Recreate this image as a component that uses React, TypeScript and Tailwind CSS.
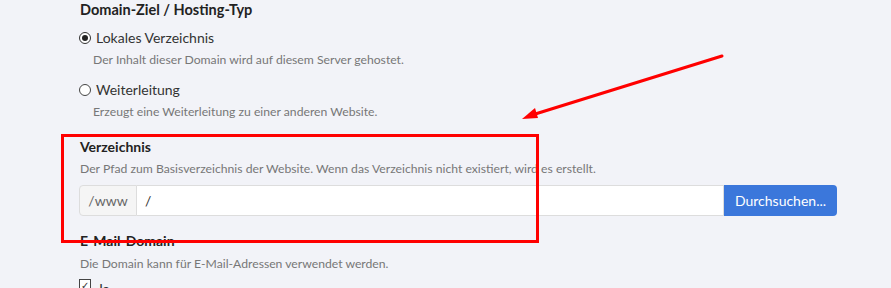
import React from "react";

export default function App() {
  return (
    <div
      className="relative w-[891px] h-[288px] overflow-hidden bg-[#f2f3f8] text-[#333]"
      style={{ fontFamily: 'Lato, "Noto Sans", sans-serif' }}
    >
      <div className="pl-[79px] pr-[54px]">
        <div className="h-[20px] pt-[1px] text-[14.5px] leading-[18px] font-bold text-[#222] pl-[1px]">
          Domain-Ziel / Hosting-Typ
        </div>
        <div className="mt-[8px] flex items-center h-[20px]">
          <span className="w-[12px] h-[12px] rounded-full border border-[#333] flex items-center justify-center bg-white">
            <span className="w-[6px] h-[6px] rounded-full bg-[#222]" />
          </span>
          <span className="ml-[5px] text-[14px] leading-[20px]">Lokales Verzeichnis</span>
        </div>
        <div className="mt-[2px] pl-[14px] text-[12.2px] leading-[20px] text-[#777]">
          Der Inhalt dieser Domain wird auf diesem Server gehostet.
        </div>
        <div className="mt-[10px] flex items-center h-[20px]">
          <span className="w-[12px] h-[12px] rounded-full border border-[#444] bg-white" />
          <span className="ml-[5px] text-[14px] leading-[20px]">Weiterleitung</span>
        </div>
        <div className="mt-[2px] pl-[14px] text-[12.2px] leading-[20px] text-[#777]">
          Erzeugt eine Weiterleitung zu einer anderen Website.
        </div>
        <div className="mt-[15px] pl-[1px] text-[14px] leading-[20px] font-bold text-[#222]">Verzeichnis</div>
        <div className="mt-[2px] pl-[1px] text-[12.2px] leading-[20px] text-[#777]">
          Der Pfad zum Basisverzeichnis der Website. Wenn das Verzeichnis nicht existiert, wird es erstellt.
        </div>
        <div className="mt-[6px] flex h-[31px]">
          <div className="w-[58px] flex items-center justify-center bg-[#f5f5f5] border border-[#ddd] rounded-l-[4px] text-[14px] text-[#666]">
            /www
          </div>
          <div className="flex-1 flex items-center bg-white border-y border-r border-[#ddd] pl-[8px] text-[14px] text-[#333]">
            /
          </div>
          <div className="w-[113px] flex items-center justify-center bg-[#3b77db] rounded-r-[4px] text-[14px] text-white">
            Durchsuchen...
          </div>
        </div>
        <div className="mt-[15px] pl-[1px] text-[14px] leading-[20px] font-bold text-[#222]">E-Mail-Domain</div>
        <div className="mt-[3px] pl-[1px] text-[12.2px] leading-[20px] text-[#777]">
          Die Domain kann für E-Mail-Adressen verwendet werden.
        </div>
        <div className="mt-[5px] flex items-start">
          <span className="w-[12px] h-[12px] border border-[#444] bg-white text-[10px] leading-[10px] flex items-center justify-center">
            ✓
          </span>
          <span className="ml-[6px] text-[14px] leading-[20px]">Ja</span>
        </div>
      </div>

      <div className="absolute left-[61px] top-[134px] w-[478px] h-[109px] border-[3px] border-[#ff0000]" />

      <svg className="absolute left-0 top-0" width="891" height="288" viewBox="0 0 891 288">
        <line x1="722" y1="56" x2="532" y2="115" stroke="#ff0000" strokeWidth="3" strokeLinecap="round" />
        <polygon points="522,119 535,108 538,118" fill="#ff0000" />
      </svg>
    </div>
  );
}
